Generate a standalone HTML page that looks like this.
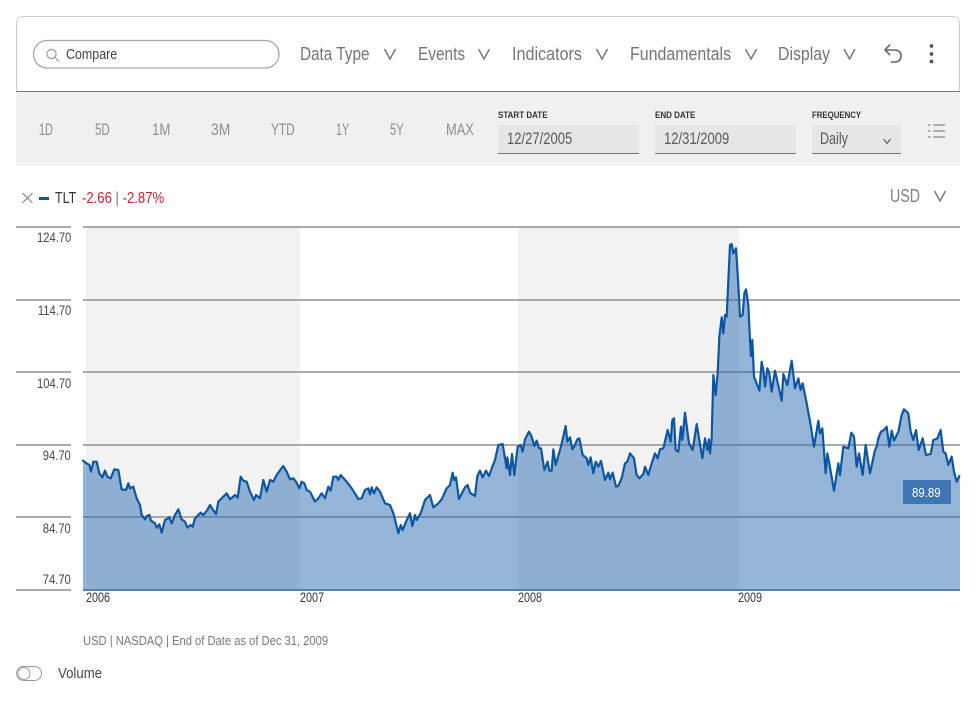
<!DOCTYPE html>
<html><head><meta charset="utf-8"><style>
html,body{margin:0;padding:0;background:#fff}
#p{position:relative;width:976px;height:706px;overflow:hidden;background:#fff;font-family:"Liberation Sans",sans-serif}
.t{position:absolute;white-space:nowrap;line-height:1;transform-origin:0 50%}
.m{font-size:18px;color:#757575;top:45px}
.r{font-size:16.500px;color:#8f8f8f;top:121px}
.l{font-size:9px;font-weight:bold;color:#333;top:111px}
.i{position:absolute;top:125px;height:28px;background:#e6e6e6;border-bottom:1px solid #777}
.v{font-size:16.500px;color:#5a5a5a;top:130px}
.y{font-size:13.500px;color:#4a4a4a;right:905px;text-align:right;transform-origin:100% 50%;transform:scaleX(.83)}
.x{font-size:13.500px;color:#333;top:591px;transform:scaleX(.8)}
svg{position:absolute;left:0;top:0}
</style></head><body><div id="p">
<svg width="976" height="706" viewBox="0 0 976 706">
<rect x="16.5" y="16.5" width="943" height="90" rx="6" fill="#fff" stroke="#ccc"/>
<rect x="16" y="92" width="944" height="74" fill="#f0f0f0"/>
<rect x="16" y="91" width="944" height="1" fill="#777"/>
<rect x="33.5" y="40.5" width="245.500" height="27.500" rx="13.700" fill="#fff" stroke="#a8a8a8" stroke-width="1.300"/>
<circle cx="51.500" cy="54" r="4.600" fill="none" stroke="#999" stroke-width="1.200"/><path d="M55 57.500L59 61.500" stroke="#999" stroke-width="1.200"/>
<g fill="none" stroke="#777" stroke-width="1.500"><path d="M384.500 49L390 59L395.500 49M478.500 49L484 59L489.500 49M596.500 49L602 59L607.500 49M745.500 49L751 59L756.500 49M844 49L849.500 59L855 49M934.500 191L940 201L945.500 191"/></g>
<path d="M890 44.500L885 50L890 55M885 50H894Q901 50 901 56Q901 62 894 62H891" fill="none" stroke="#666" stroke-width="1.600"/>
<circle cx="931.500" cy="46" r="1.900" fill="#555"/><circle cx="931.500" cy="54" r="1.900" fill="#555"/><circle cx="931.500" cy="61.500" r="1.900" fill="#555"/>
<g stroke="#888" stroke-width="1.200"><path d="M933 125H945M933 131H945M933 137H945"/><path d="M928 125H930.500M928 131H930.500M928 137H930.500"/></g>
<path d="M22.500 193L32.500 203M32.500 193L22.500 203" stroke="#888" stroke-width="1.200"/>
<rect x="39" y="197" width="10" height="3" fill="#0b55a2"/>
<rect x="86" y="228" width="214" height="362" fill="#f2f2f2"/>
<rect x="518" y="228" width="221" height="362" fill="#f2f2f2"/>
<g fill="#aaa"><rect x="16" y="226" width="55" height="2"/><rect x="83" y="226" width="877" height="2"/><rect x="16" y="299" width="55" height="2"/><rect x="83" y="299" width="877" height="2"/><rect x="16" y="371" width="55" height="2"/><rect x="83" y="371" width="877" height="2"/><rect x="16" y="444" width="55" height="2"/><rect x="83" y="444" width="877" height="2"/><rect x="16" y="516" width="55" height="2"/><rect x="83" y="516" width="877" height="2"/><rect x="16" y="589" width="55" height="2"/><rect x="83" y="589" width="877" height="2"/></g>
<g transform="translate(70,430) scale(.33333)" fill="#2c6cb2" fill-opacity=".5" stroke="none">
<path d="M39 480L39 92 50 100 58 105 63 125 70 95 80 95 88 130 97 142 105 122 112 140 122 145 133 118 145 120 155 178 168 180 175 160 180 175 190 170 200 205 210 225 215 255 225 268 230 258 238 255 243 272 255 280 260 293 268 283 275 308 285 270 298 262 305 280 315 255 325 238 335 268 345 275 352 293 362 285 368 290 375 265 385 255 392 248 400 255 412 240 420 225 428 238 438 252 445 215 460 200 470 190 480 208 495 195 503 203 512 140 520 152 530 155 540 185 552 210 558 195 570 205 580 150 590 185 600 150 610 155 620 135 632 118 640 108 650 125 660 148 670 145 678 155 688 175 695 155 703 160 710 180 720 185 735 215 745 205 755 190 765 205 775 170 782 182 790 140 800 140 805 150 812 135 830 155 845 175 865 207 875 205 885 180 895 175 900 193 905 172 912 190 920 172 930 185 945 220 960 225 970 250 978 280 985 310 992 285 998 300 1008 275 1020 250L1020 480Z"/>
</g>
<g transform="translate(390,400) scale(.33333)" fill="#2c6cb2" fill-opacity=".5" stroke="none">
<path d="M60 570L60 340 67 378 75 345 80 360 92 340 105 300 120 285 130 322 145 310 155 298 170 265 180 255 188 218 192 240 198 232 207 297 225 262 233 255 240 278 255 288 262 228 270 212 278 232 288 212 297 228 305 205 315 180 325 135 338 132 350 205 352 172 360 225 366 162 373 225 383 140 392 135 398 155 405 118 417 95 425 110 433 138 440 122 447 145 453 145 463 210 473 185 478 212 485 212 490 148 497 195 510 150 520 110 527 78 532 125 540 112 547 148 555 135 562 118 568 115 578 165 590 175 595 195 602 172 610 220 617 185 625 200 633 183 645 240 655 218 660 238 668 218 678 260 685 258 695 235 705 190 712 185 720 160 732 175 740 225 748 235 760 222 765 200 775 225 785 190 795 160 803 175 810 148 820 145 833 90 842 125 847 60 852 55 857 150 865 155 873 80 877 120 885 38 897 130 908 150 920 72 937 175 945 115 952 150 957 118 960 160L960 570Z"/>
</g>
<g transform="translate(680,230) scale(.33333)" fill="#2c6cb2" fill-opacity=".5" stroke="none">
<path d="M90 1080L90 670 95 625 100 435 107 495 113 430 118 320 125 262 130 310 135 255 140 260 150 45 155 42 160 70 168 55 175 165 180 260 188 255 193 190 198 178 205 225 210 330 213 378 217 330 222 440 238 482 245 395 250 420 255 470 262 415 268 430 275 485 285 422 298 480 305 512 310 432 322 465 335 392 345 475 355 445 362 480 368 460 380 520 392 585 402 650 415 572 420 610 427 595 437 730 442 670 447 695 462 782 475 700 480 735 490 650 505 655 514 608 522 620 530 710 537 670 548 735 557 645 570 730 585 660 590 650 595 625 603 605 612 600 620 590 628 650 635 602 642 632 655 605 665 555 672 538 685 550 692 605 700 630 708 600 716 660 728 625 738 675 752 672 760 630 772 625 782 600 790 665 797 670 805 705 815 680 822 725 830 755 840 738L840 1080Z"/>
</g>
<g fill="none" stroke="#0b55a2" stroke-width="6.500" stroke-linejoin="round" stroke-linecap="round">
<polyline transform="translate(70,430) scale(.33333)" points="39,92 50,100 58,105 63,125 70,95 80,95 88,130 97,142 105,122 112,140 122,145 133,118 145,120 155,178 168,180 175,160 180,175 190,170 200,205 210,225 215,255 225,268 230,258 238,255 243,272 255,280 260,293 268,283 275,308 285,270 298,262 305,280 315,255 325,238 335,268 345,275 352,293 362,285 368,290 375,265 385,255 392,248 400,255 412,240 420,225 428,238 438,252 445,215 460,200 470,190 480,208 495,195 503,203 512,140 520,152 530,155 540,185 552,210 558,195 570,205 580,150 590,185 600,150 610,155 620,135 632,118 640,108 650,125 660,148 670,145 678,155 688,175 695,155 703,160 710,180 720,185 735,215 745,205 755,190 765,205 775,170 782,182 790,140 800,140 805,150 812,135 830,155 845,175 865,207 875,205 885,180 895,175 900,193 905,172 912,190 920,172 930,185 945,220 960,225 970,250 978,280 985,310 992,285 998,300 1008,275 1020,250"/>
<polyline transform="translate(390,400) scale(.33333)" points="60,340 67,378 75,345 80,360 92,340 105,300 120,285 130,322 145,310 155,298 170,265 180,255 188,218 192,240 198,232 207,297 225,262 233,255 240,278 255,288 262,228 270,212 278,232 288,212 297,228 305,205 315,180 325,135 338,132 350,205 352,172 360,225 366,162 373,225 383,140 392,135 398,155 405,118 417,95 425,110 433,138 440,122 447,145 453,145 463,210 473,185 478,212 485,212 490,148 497,195 510,150 520,110 527,78 532,125 540,112 547,148 555,135 562,118 568,115 578,165 590,175 595,195 602,172 610,220 617,185 625,200 633,183 645,240 655,218 660,238 668,218 678,260 685,258 695,235 705,190 712,185 720,160 732,175 740,225 748,235 760,222 765,200 775,225 785,190 795,160 803,175 810,148 820,145 833,90 842,125 847,60 852,55 857,150 865,155 873,80 877,120 885,38 897,130 908,150 920,72 937,175 945,115 952,150 957,118 960,160"/>
<polyline transform="translate(680,230) scale(.33333)" points="90,670 95,625 100,435 107,495 113,430 118,320 125,262 130,310 135,255 140,260 150,45 155,42 160,70 168,55 175,165 180,260 188,255 193,190 198,178 205,225 210,330 213,378 217,330 222,440 238,482 245,395 250,420 255,470 262,415 268,430 275,485 285,422 298,480 305,512 310,432 322,465 335,392 345,475 355,445 362,480 368,460 380,520 392,585 402,650 415,572 420,610 427,595 437,730 442,670 447,695 462,782 475,700 480,735 490,650 505,655 514,608 522,620 530,710 537,670 548,735 557,645 570,730 585,660 590,650 595,625 603,605 612,600 620,590 628,650 635,602 642,632 655,605 665,555 672,538 685,550 692,605 700,630 708,600 716,660 728,625 738,675 752,672 760,630 772,625 782,600 790,665 797,670 805,705 815,680 822,725 830,755 838,738"/>
</g>
<rect x="83" y="589" width="877" height="2" fill="#5e7fa8"/>
<rect x="903" y="480" width="48" height="24" fill="#3f75b5"/>
<rect x="16.500" y="666.500" width="25" height="14" rx="7" fill="#fff" stroke="#999"/>
<circle cx="24" cy="673.500" r="6" fill="#fff" stroke="#999"/>
</svg>
<div class="t" style="left:66px;top:47px;font-size:15px;color:#444;transform:scaleX(.83)">Compare</div>
<div class="t m" style="left:300px;transform:scaleX(.85)">Data Type</div>
<div class="t m" style="left:418px;transform:scaleX(.855)">Events</div>
<div class="t m" style="left:512px;transform:scaleX(.897)">Indicators</div>
<div class="t m" style="left:630px;transform:scaleX(.886)">Fundamentals</div>
<div class="t m" style="left:778px;transform:scaleX(.88)">Display</div>
<div class="t r" style="left:39px;top:122px;transform:scaleX(.66)">1D</div>
<div class="t r" style="left:95px;top:122px;transform:scaleX(.7)">5D</div>
<div class="t r" style="left:152px;top:122px;transform:scaleX(.8)">1M</div>
<div class="t r" style="left:211px;top:122px;transform:scaleX(.84)">3M</div>
<div class="t r" style="left:271px;top:122px;transform:scaleX(.72)">YTD</div>
<div class="t r" style="left:336px;top:122px;transform:scaleX(.65)">1Y</div>
<div class="t r" style="left:390px;top:122px;transform:scaleX(.68)">5Y</div>
<div class="t r" style="left:446px;top:122px;transform:scaleX(.78)">MAX</div>
<div class="t l" style="left:498px;transform:scaleX(.89)">START DATE</div>
<div class="t l" style="left:655px;transform:scaleX(.89)">END DATE</div>
<div class="t l" style="left:812px;transform:scaleX(.87)">FREQUENCY</div>
<div class="i" style="left:498px;width:141px"></div>
<div class="i" style="left:655px;width:141px"></div>
<div class="i" style="left:812px;width:89px"></div>
<svg width="976" height="706" viewBox="0 0 976 706"><path d="M883.500 139L887 143.500L890.500 139" fill="none" stroke="#666" stroke-width="1.300"/></svg>
<div class="t v" style="left:507px;top:131px;transform:scaleX(.79)">12/27/2005</div>
<div class="t v" style="left:664px;top:131px;transform:scaleX(.79)">12/31/2009</div>
<div class="t v" style="left:820px;top:131px;transform:scaleX(.76)">Daily</div>
<div class="t" style="left:55px;top:191px;font-size:16px;color:#333;transform:scaleX(.78)">TLT</div>
<div class="t" style="left:82px;top:191px;font-size:16px;color:#c8202f;transform:scaleX(.82)">-2.66 <span style="color:#777">|</span> -2.87%</div>
<div class="t" style="left:890px;top:187px;font-size:18px;color:#808080;transform:scaleX(.79)">USD</div>
<div class="t y" style="top:231px">124.70</div>
<div class="t y" style="top:304px">114.70</div>
<div class="t y" style="top:377px">104.70</div>
<div class="t y" style="top:449px">94.70</div>
<div class="t y" style="top:522px">84.70</div>
<div class="t y" style="top:573px">74.70</div>
<div class="t x" style="left:86px">2006</div>
<div class="t x" style="left:300px">2007</div>
<div class="t x" style="left:518px">2008</div>
<div class="t x" style="left:738px">2009</div>
<div class="t" style="left:912px;top:486px;font-size:13px;color:#fff;transform:scaleX(.88)">89.89</div>
<div class="t" style="left:83px;top:634px;font-size:13px;color:#777;transform:scaleX(.86)">USD | NASDAQ | End of Date as of Dec 31, 2009</div>
<div class="t" style="left:58px;top:666px;font-size:15px;color:#444;transform:scaleX(.88)">Volume</div>
</div></body></html>
